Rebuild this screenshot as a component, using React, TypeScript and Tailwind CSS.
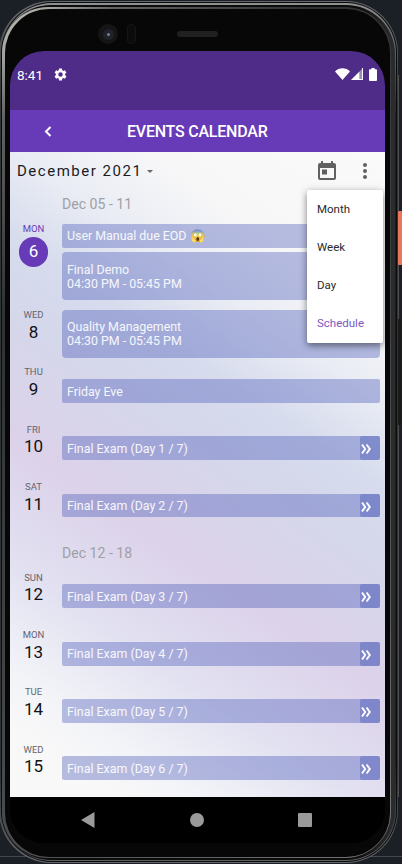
import React from 'react';

type EventItem = { title: string; time?: string; more?: boolean };
type DayItem = { day: string; date: string; events: EventItem[]; active?: boolean };

const firstWeek: DayItem[] = [
  {
    day: 'MON',
    date: '6',
    active: true,
    events: [{ title: 'User Manual due EOD 😱' }, { title: 'Final Demo', time: '04:30 PM - 05:45 PM' }],
  },
  { day: 'WED', date: '8', events: [{ title: 'Quality Management', time: '04:30 PM - 05:45 PM' }] },
  { day: 'THU', date: '9', events: [{ title: 'Friday Eve' }] },
  { day: 'FRI', date: '10', events: [{ title: 'Final Exam (Day 1 / 7)', more: true }] },
  { day: 'SAT', date: '11', events: [{ title: 'Final Exam (Day 2 / 7)', more: true }] },
];

const secondWeek: DayItem[] = [
  { day: 'SUN', date: '12', events: [{ title: 'Final Exam (Day 3 / 7)', more: true }] },
  { day: 'MON', date: '13', events: [{ title: 'Final Exam (Day 4 / 7)', more: true }] },
  { day: 'TUE', date: '14', events: [{ title: 'Final Exam (Day 5 / 7)', more: true }] },
  { day: 'WED', date: '15', events: [{ title: 'Final Exam (Day 6 / 7)', more: true }] },
];

function EventBar({ event }: { event: EventItem }) {
  if (event.time) {
    return (
      <div className="flex h-[47.8px] flex-col justify-center rounded-[4px] bg-[#3f51b5]/36 pl-[5px] pt-[1.5px] text-[12.4px] leading-[14.4px] text-white/90">
        <span>{event.title}</span>
        <span>{event.time}</span>
      </div>
    );
  }
  return (
    <div className="flex h-[23.8px] items-center justify-between rounded-[2px] bg-[#3f51b5]/36 pl-[5px] text-[12.4px] leading-[14px] text-white/90">
      <span className="whitespace-nowrap pt-[1.5px]">{event.title}</span>
      {event.more && (
        <span className="flex h-full w-[20px] items-center rounded-[2px] bg-[#3f51b5]/36 pl-[1px] pt-[2px]">
          <svg width="11" height="12" viewBox="0 0 11 12" fill="none" stroke="white" strokeWidth="1.9">
            <path d="M1 1.500 4.200 6 1 10.500M5.600 1.500 8.800 6 5.600 10.500" />
          </svg>
        </span>
      )}
    </div>
  );
}

function DayRow({ item }: { item: DayItem }) {
  const tall = item.events.length > 1;
  const padded = item.events.length === 1 && !item.events[0].time;
  return (
    <div className={`flex ${tall ? 'h-[86px]' : 'h-[57.3px]'}`}>
      <div className="flex w-[52px] flex-col items-center pr-[5px] pt-[4.2px]">
        <span className={`text-[9.5px] leading-[11px] ${item.active ? 'text-[#673ab7]' : 'text-[#65646f]'}`}>
          {item.day}
        </span>
        {item.active ? (
          <span className="mt-[3px] flex size-[29.5px] items-center justify-center rounded-full bg-[#673ab7] text-[17px] text-white">
            {item.date}
          </span>
        ) : (
          <span className="mt-[0.5px] text-[17px] leading-[22px] text-[#111]">{item.date}</span>
        )}
      </div>
      <div className={`flex w-[317.7px] flex-col gap-[4.8px] ${padded ? 'pt-[16.8px]' : 'pt-[4.8px]'}`}>
        {item.events.map((e) => (
          <EventBar key={e.title} event={e} />
        ))}
      </div>
    </div>
  );
}

function StatusBar() {
  return (
    <div className="flex h-[59px] items-start justify-between bg-[#4f2c88] pl-[7px] pr-[8px] pt-[15px] text-white">
      <div className="flex h-4 items-center">
        <span className="w-[36px] pt-px text-[13.5px] leading-4">8:41</span>
        <svg width="15" height="15" viewBox="0 0 24 24" fill="white">
          <path d="M19.14 12.94c.04-.3.06-.61.06-.94s-.02-.64-.07-.94l2.03-1.58c.18-.14.23-.41.12-.61l-1.92-3.32c-.12-.22-.37-.29-.59-.22l-2.39.96c-.5-.38-1.03-.7-1.62-.94l-.36-2.54c-.04-.24-.24-.41-.48-.41h-3.84c-.24 0-.43.17-.47.41l-.36 2.54c-.59.24-1.13.57-1.62.94l-2.39-.96c-.22-.08-.47 0-.59.22L2.74 8.87c-.12.21-.08.47.12.61l2.03 1.58c-.05.3-.09.63-.09.94s.02.64.07.94l-2.03 1.58c-.18.14-.23.41-.12.61l1.92 3.32c.12.22.37.29.59.22l2.39-.96c.5.38 1.03.7 1.62.94l.36 2.54c.05.24.24.41.48.41h3.84c.24 0 .44-.17.47-.41l.36-2.54c.59-.24 1.13-.56 1.62-.94l2.39.96c.22.08.47 0 .59-.22l1.92-3.32c.12-.22.07-.47-.12-.61l-2.01-1.58zM12 15.6A3.6 3.6 0 1 1 12 8.4a3.6 3.6 0 0 1 0 7.2z" />
        </svg>
      </div>
      <div className="flex h-4 items-center">
        <svg width="15" height="12" viewBox="0 0 15 12" fill="white">
          <path d="M0 3.4C4-.8 11-.8 15 3.4L7.5 12z" />
        </svg>
        <svg className="ml-[1px]" width="12" height="12" viewBox="0 0 12 12">
          <path d="M12 0v12H0z" fill="white" fillOpacity=".45" />
          <path d="M8.3 3.7V12H0zM11 0h1v12h-4v-1h3z" fill="white" />
        </svg>
        <svg className="ml-[6px]" width="8" height="13" viewBox="0 0 8 13" fill="white">
          <path d="M2.4 0h3.2v1.3H7q1 0 1 1V12q0 1-1 1H1q-1 0-1-1V2.3q0-1 1-1h1.4z" />
        </svg>
      </div>
    </div>
  );
}

function ViewMenu() {
  return (
    <div className="absolute left-[297px] top-[38px] flex h-[153px] w-[75.5px] flex-col rounded-[2px] bg-white pt-px text-[11.5px] text-[#2a2a2a] shadow-[0_3px_6px_rgba(0,0,0,0.35),0_1px_10px_rgba(0,0,0,0.18)]">
      {['Month', 'Week', 'Day', 'Schedule'].map((label) => (
        <div
          key={label}
          className={`flex flex-1 items-center pl-[10px] ${label === 'Schedule' ? 'text-[#7e57c2]' : ''}`}
        >
          {label}
        </div>
      ))}
    </div>
  );
}

function DeviceBody() {
  return (
    <>
      {/* side buttons and rails of the device */}
      <div className="absolute left-[398px] top-[75px] h-[722px] w-px bg-[#4a4c50]" />
      <div className="absolute left-[398px] top-[211px] h-[54px] w-[4px] rounded-l-[1px] bg-[#e8765f]" />
      <div className="absolute left-[398px] top-[319px] h-[106px] w-[4px] bg-[#1a1a1b]" />
      <div className="absolute left-0 top-[856px] h-px w-[402px] bg-[#44474c]" />

      {/* metal rim: outer edge, groove, bright band, inner bevel */}
      <div className="absolute left-[-1px] top-[1px] h-[862px] w-[399px] rounded-[52px] bg-[linear-gradient(180deg,#66676a_0%,#2f3537_12%,#2f3537_90%,#66676a_100%)] p-px pl-[2px]">
        <div className="h-full rounded-[51px] bg-[#0b0b0c] p-px">
          <div className="h-full rounded-[50px] bg-[linear-gradient(180deg,#919191_0%,#5c5d5e_6%,#1c1d1e_14%,#1c1d1e_88%,#606060_100%)] pb-[1.5px] pr-[1px] pt-[1.5px]">
            <div className="h-full rounded-[49px] bg-[linear-gradient(90deg,#0b0b0c_0%,#0b0b0c_90%,#2a2b2d_99%)] pb-[1.5px] pr-[4px] pt-[2.5px]">
              <div className="h-full rounded-[46px] bg-[linear-gradient(135deg,#c4c4be_0%,#a2a29e_4%,#626361_9%,#303132_25%,#4c4e50_70%,#777_100%)] pb-[1.5px] pl-[3px] pr-[1.5px] pt-[2px]">
                <div className="h-full rounded-[44px] bg-[#070708]" />
              </div>
            </div>
          </div>
        </div>
      </div>

      {/* front camera, sensor and speaker */}
      <div className="absolute left-[98px] top-[24px] flex size-[20px] items-center justify-center rounded-full bg-[#151516]">
        <div className="flex size-[11px] items-center justify-center rounded-full bg-[#202229]">
          <div className="size-[3px] rounded-full bg-[#76819d]" />
        </div>
      </div>
      <div className="absolute left-[127px] top-[24px] h-[20px] w-[9px] rounded-[4px] border border-[#161617] bg-[#0c0c0d]" />
      <div className="absolute left-[177px] top-[31px] h-[6px] w-[41px] rounded-[3px] bg-[#202021]" />
    </>
  );
}

export default function App() {
  return (
    <div className="relative h-[864px] w-[402px] overflow-hidden bg-[#1b1f26] font-['Roboto',sans-serif]">
      <DeviceBody />

      <div className="relative ml-[10px] mt-[51px] flex h-[792px] w-[374.5px] flex-col overflow-hidden rounded-[34px] bg-black">
        <StatusBar />
        <div className="relative flex h-[42px] items-center justify-center bg-[#673ab7] pt-[2px] text-[16px] font-medium tracking-[-0.22px] text-white">
          <svg className="absolute left-[34px] top-[16px]" width="8" height="11" viewBox="0 0 8 11" fill="none" stroke="white" strokeWidth="2">
            <path d="M6.5 1 2 5.5l4.5 4.5" />
          </svg>
          EVENTS CALENDAR
        </div>

        <div className="relative h-[645px] bg-[linear-gradient(34deg,#f8f8f8_0%,#f8f8f8_8%,#f3f4f8_14%,#e2e1f1_26%,#dcd2ea_40%,#d5d7eb_54%,#d6dbed_62%,#e9ecf4_72%,#f7f7f8_82%,#fafafa_100%)]">
          <div className="flex h-[38px] items-center pl-[7px]">
            <span className="text-[15px] tracking-[1.52px] text-[#1c1c1e]">December 2021</span>
            <svg className="ml-[5px]" width="6" height="3" viewBox="0 0 6 3" fill="#666">
              <path d="M0 0h6L3 3z" />
            </svg>
            <svg className="ml-auto" width="18" height="20" viewBox="0 0 18 20" fill="#616161">
              <path
                d="M3 0h2v2h8V0h2v2h1q2 0 2 2v13q0 2-2 2H2q-2 0-2-2V4q0-2 2-2h1zM2 7v10h14V7zM4 8.500h5v5H4z"
                fillRule="evenodd"
              />
            </svg>
            <svg className="ml-[27px] mr-[17.5px]" width="4" height="16" viewBox="0 0 4 16" fill="#616161">
              <circle cx="2" cy="2" r="2" />
              <circle cx="2" cy="8" r="2" />
              <circle cx="2" cy="14" r="2" />
            </svg>
          </div>
          <div className="flex h-[29px] items-center pl-[52px] pt-px text-[14.1px] text-[#a0a0a4]">Dec 05 - 11</div>
          {firstWeek.map((d) => (
            <DayRow key={d.date} item={d} />
          ))}
          <div className="flex h-[33.5px] items-center pl-[52px] pt-[5.5px] text-[14.1px] text-[#a0a0a4]">Dec 12 - 18</div>
          {secondWeek.map((d) => (
            <DayRow key={d.date} item={d} />
          ))}
          <ViewMenu />
        </div>

        <div className="flex h-[46px] items-center justify-between bg-black pl-[71px] pr-[72.5px]">
          <svg width="14" height="16" viewBox="0 0 14 16" fill="#9a9a9a">
            <path d="M13.5 0v16L0 8z" />
          </svg>
          <div className="ml-px size-[14px] rounded-full bg-[#9a9a9a]" />
          <div className="size-[14.5px] rounded-[1px] bg-[#9a9a9a]" />
        </div>
      </div>
    </div>
  );
}
